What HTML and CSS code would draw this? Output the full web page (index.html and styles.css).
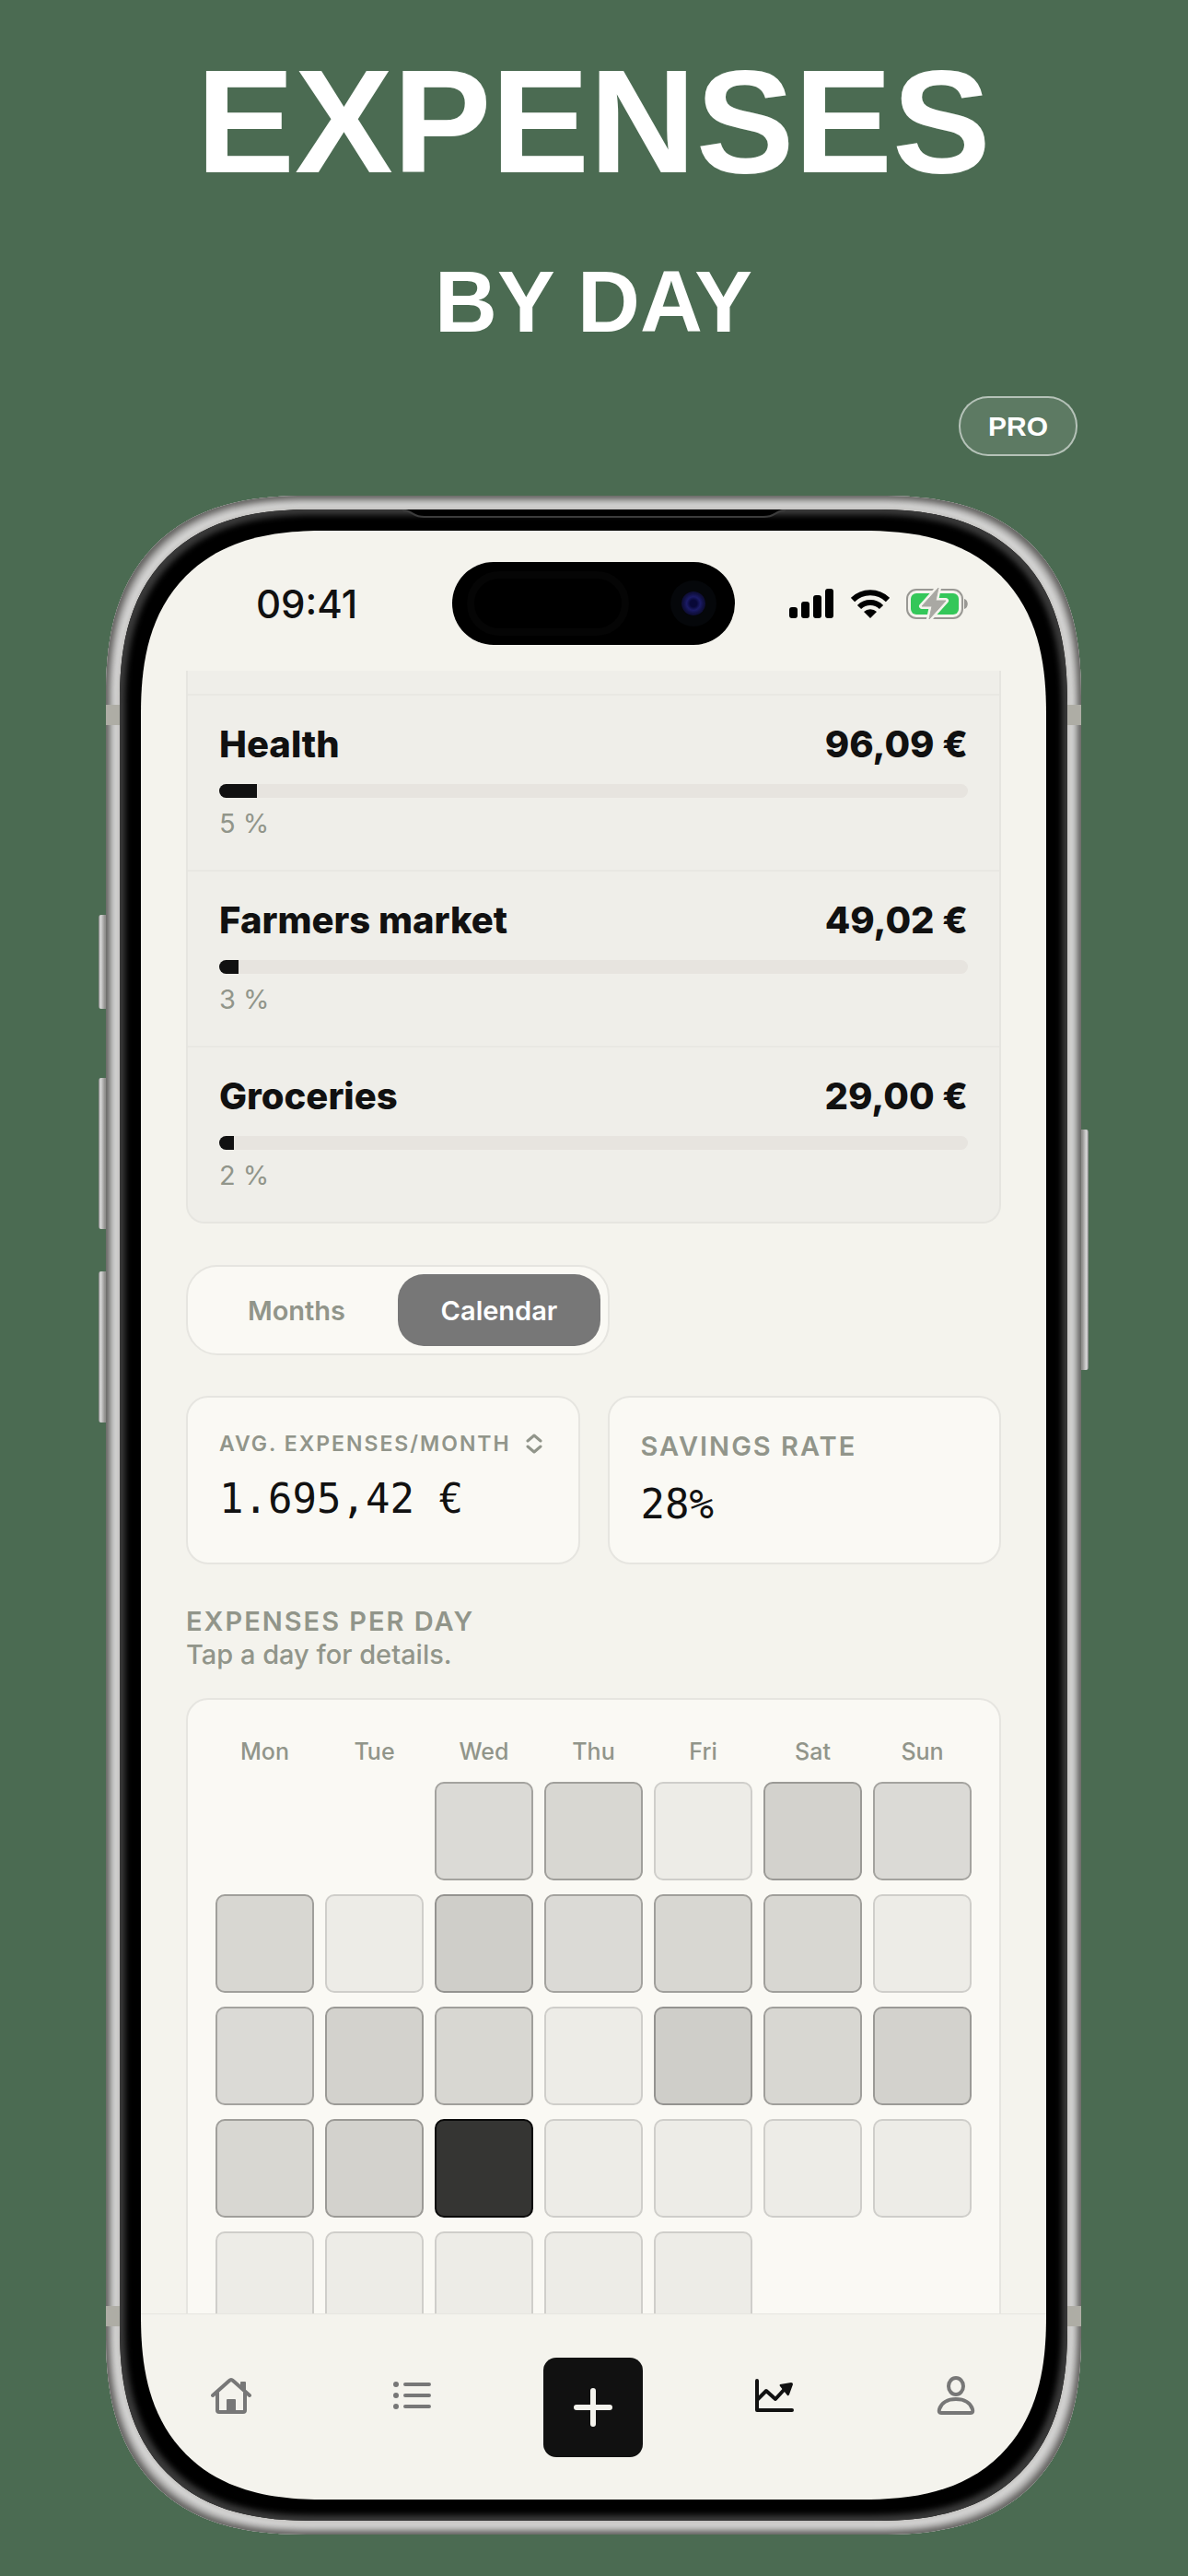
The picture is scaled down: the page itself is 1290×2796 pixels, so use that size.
FILE: index.html
```html
<!DOCTYPE html>
<html lang="en">
<head>
    <meta charset="UTF-8" />
    <meta name="viewport" content="width=device-width, initial-scale=1.0" />
    <title>Expenses by Day</title>
    <link rel="stylesheet" href="styles.css">
</head>
<body>
    <header class="hero">
        <h1>EXPENSES</h1>
        <p class="subtitle">BY DAY</p>
        <span class="pro-badge">PRO</span>
    </header>

    <div class="phone">
        <!-- Hardware details on the frame -->
        <span class="side-button action"></span>
        <span class="side-button volume-up"></span>
        <span class="side-button volume-down"></span>
        <span class="side-button power"></span>
        <span class="antenna top-left"></span>
        <span class="antenna top-right"></span>
        <span class="antenna bottom-left"></span>
        <span class="antenna bottom-right"></span>

        <div class="bezel">
            <svg class="earpiece" viewBox="0 0 416 12" aria-hidden="true">
                <path d="M0 0 C12 0 10 8 24 8 H392 C406 8 404 0 416 0 Z" fill="#000" />
                <path d="M0 1 C12 1 10 8 24 8 H392 C406 8 404 1 416 1" fill="none" stroke="#3c3c3c" stroke-width="2" />
            </svg>

            <div class="screen">
                <div class="status-bar">
                    <span class="time">09:41</span>
                    <span class="island"><span class="sensor"></span><span class="camera"></span></span>
                    <span class="status-icons">
                        <svg width="49" height="32" viewBox="0 0 49 32" aria-hidden="true">
                            <rect x="0" y="20" width="9" height="12" rx="3" />
                            <rect x="13" y="14" width="9" height="18" rx="3" />
                            <rect x="26" y="7" width="9" height="25" rx="3" />
                            <rect x="39" y="0" width="9" height="32" rx="3" />
                        </svg>
                        <svg width="42" height="31" viewBox="0 0 42 31" aria-hidden="true">
                            <path d="M2 11 A27 27 0 0 1 40 11" fill="none" stroke="#000" stroke-width="6" />
                            <path d="M9 19 A17 17 0 0 1 33 19" fill="none" stroke="#000" stroke-width="6" />
                            <path d="M21 31 L14 24 A10 10 0 0 1 28 24 Z" />
                        </svg>
                        <svg width="68" height="36" viewBox="0 0 68 36" aria-hidden="true">
                            <rect x="1" y="3" width="60" height="31" rx="10" fill="none" stroke="#999894" stroke-width="2" />
                            <path d="M63 13 C68 14 68 23 63 24 Z" fill="#999894" />
                            <rect x="5" y="7" width="52" height="23" rx="6" fill="#34c759" />
                            <path d="M35 1 L17 21 H28 L25 35 L43 15 H32 Z" fill="#a9a8a3" stroke="#f4f3ed" stroke-width="6" stroke-linejoin="round" />
                            <path d="M35 1 L17 21 H28 L25 35 L43 15 H32 Z" fill="#a9a8a3" stroke="#a9a8a3" stroke-width="1" stroke-linejoin="round" />
                        </svg>
                    </span>
                </div>

                <main class="content">
                    <ul class="categories">
                        <li class="category cut"></li>
                        <li class="category">
                            <div class="category-head"><span>Health</span><span>96,09 €</span></div>
                            <div class="bar"><div class="bar-fill" style="width: 5%"></div></div>
                            <span class="percent">5 %</span>
                        </li>
                        <li class="category">
                            <div class="category-head"><span>Farmers market</span><span>49,02 €</span></div>
                            <div class="bar"><div class="bar-fill" style="width: 2.6%"></div></div>
                            <span class="percent">3 %</span>
                        </li>
                        <li class="category">
                            <div class="category-head"><span>Groceries</span><span>29,00 €</span></div>
                            <div class="bar"><div class="bar-fill" style="width: 2%"></div></div>
                            <span class="percent">2 %</span>
                        </li>
                    </ul>

                    <div class="segmented">
                        <button type="button">Months</button>
                        <button type="button" class="active">Calendar</button>
                    </div>

                    <div class="stats">
                        <div class="card stat">
                            <button type="button" class="stat-label small">
                                AVG. EXPENSES/MONTH
                                <svg width="18" height="22" viewBox="0 0 18 22" aria-hidden="true">
                                    <path d="M2 8 L9 2 L16 8 M2 14 L9 20 L16 14" />
                                </svg>
                            </button>
                            <span class="stat-value">1.695,42 €</span>
                        </div>
                        <div class="card stat">
                            <span class="stat-label">SAVINGS RATE</span>
                            <span class="stat-value">28%</span>
                        </div>
                    </div>

                    <h2>EXPENSES PER DAY</h2>
                    <p class="hint">Tap a day for details.</p>

                    <div class="card calendar">
                        <span class="weekday">Mon</span>
                        <span class="weekday">Tue</span>
                        <span class="weekday">Wed</span>
                        <span class="weekday">Thu</span>
                        <span class="weekday">Fri</span>
                        <span class="weekday">Sat</span>
                        <span class="weekday">Sun</span>

                        <button type="button" class="day level-1 first" aria-label="1"></button>
                        <button type="button" class="day level-2" aria-label="2"></button>
                        <button type="button" class="day" aria-label="3"></button>
                        <button type="button" class="day level-3" aria-label="4"></button>
                        <button type="button" class="day level-1" aria-label="5"></button>

                        <button type="button" class="day level-2" aria-label="6"></button>
                        <button type="button" class="day" aria-label="7"></button>
                        <button type="button" class="day level-4" aria-label="8"></button>
                        <button type="button" class="day level-1" aria-label="9"></button>
                        <button type="button" class="day level-2" aria-label="10"></button>
                        <button type="button" class="day level-2" aria-label="11"></button>
                        <button type="button" class="day" aria-label="12"></button>

                        <button type="button" class="day level-1" aria-label="13"></button>
                        <button type="button" class="day level-3" aria-label="14"></button>
                        <button type="button" class="day level-2" aria-label="15"></button>
                        <button type="button" class="day" aria-label="16"></button>
                        <button type="button" class="day level-4" aria-label="17"></button>
                        <button type="button" class="day level-2" aria-label="18"></button>
                        <button type="button" class="day level-3" aria-label="19"></button>

                        <button type="button" class="day level-2" aria-label="20"></button>
                        <button type="button" class="day level-3" aria-label="21"></button>
                        <button type="button" class="day level-max" aria-label="22"></button>
                        <button type="button" class="day" aria-label="23"></button>
                        <button type="button" class="day" aria-label="24"></button>
                        <button type="button" class="day" aria-label="25"></button>
                        <button type="button" class="day" aria-label="26"></button>

                        <button type="button" class="day" aria-label="27"></button>
                        <button type="button" class="day" aria-label="28"></button>
                        <button type="button" class="day" aria-label="29"></button>
                        <button type="button" class="day" aria-label="30"></button>
                        <button type="button" class="day" aria-label="31"></button>
                    </div>
                </main>

                <nav class="tab-bar">
                    <a href="#home" aria-label="Home">
                        <svg width="44" height="48" viewBox="0 0 44 48" aria-hidden="true">
                            <path d="M2 21 L20 5 Q22 3 24 5 L42 21 M7 18 V37 Q7 39 9 39 H35 Q37 39 37 37 V18" />
                            <path class="solid" d="M32 7 Q32 6 33 6 H37 Q38 6 38 7 V18 L32 12 Z M17 26 Q17 25 18 25 H26 Q27 25 27 26 V38 H17 Z" />
                        </svg>
                    </a>
                    <a href="#list" aria-label="Transactions">
                        <svg width="44" height="48" viewBox="0 0 44 48" aria-hidden="true">
                            <path d="M14 9 H40 M14 21 H40 M14 33 H40" />
                            <circle class="solid" cx="4" cy="9" r="3" />
                            <circle class="solid" cx="4" cy="21" r="3" />
                            <circle class="solid" cx="4" cy="33" r="3" />
                        </svg>
                    </a>
                    <button type="button" class="add" aria-label="Add expense">
                        <svg width="46" height="46" viewBox="0 0 46 46" aria-hidden="true">
                            <path d="M23 5 V41 M5 23 H41" />
                        </svg>
                    </button>
                    <a href="#stats" class="current" aria-label="Statistics">
                        <svg width="44" height="48" viewBox="0 0 44 48" aria-hidden="true">
                            <path d="M3 5 V37 H41 M4 25 L13 16 L23 25 L34 13" />
                            <path class="solid" d="M28 9 L40 7 Q42 7 42 9 L38 20 Q37 22 36 21 L28 11 Q27 10 28 9 Z" />
                        </svg>
                    </a>
                    <a href="#profile" aria-label="Profile">
                        <svg width="44" height="48" viewBox="0 0 44 48" aria-hidden="true">
                            <ellipse cx="22" cy="11" rx="8" ry="9" />
                            <path d="M6 40 Q3 40 4 36 C6 29 13 25 22 25 C31 25 38 29 40 36 Q41 40 38 40 Z" />
                        </svg>
                    </a>
                </nav>
            </div>
        </div>
    </div>
</body>
</html>
```
FILE: styles.css
```css
* {
    box-sizing: border-box;
}

body {
    font-family: Inter, "Liberation Sans", sans-serif;
    margin: 0;
    padding: 0 116px 45px 115px;
    background-color: #4b6b52;
    color: #111;
}

button {
    font-family: inherit;
    margin: 0;
    padding: 0;
    border: none;
    background: none;
}

/* Title area above the phone */
.hero {
    display: flex;
    flex-direction: column;
    align-items: center;
    padding-top: 40px;
    color: #fff;
    font-family: "Liberation Sans", Arial, sans-serif;
    font-weight: bold;
}

h1 {
    margin: 0;
    font-size: 160px;
    line-height: 184px;
}

.subtitle {
    margin: 48px 0 0;
    font-size: 94px;
    line-height: 112px;
}

.pro-badge {
    align-self: flex-end;
    margin: 46px 4px 43px 0;
    padding: 0 30px;
    border: 2px solid rgba(255, 255, 255, 0.55);
    border-radius: 32px;
    background-color: rgba(255, 255, 255, 0.1);
    font-size: 30px;
    line-height: 61px;
}

/* Phone frame */
.phone {
    position: relative;
    padding: 15px;
    border-radius: 180px;
    background-color: #c9c8c6;
    box-shadow: inset 0 0 5px 3px #666563, inset 0 0 7px 7px #a2a1a0, inset 0 0 3px 12px #d8d8d7;
}

.bezel {
    position: relative;
    padding: 23px;
    border-radius: 174px;
    background-color: #000;
    box-shadow: inset 0 0 6px 6px #3a3a3a;
}

.earpiece {
    position: absolute;
    top: 0;
    left: 50%;
    width: 416px;
    height: 12px;
    transform: translateX(-50%);
}

.side-button {
    position: absolute;
    width: 8px;
    background: linear-gradient(90deg, #777 0, #ddd 2px, #8f8e8c 7px);
    border-radius: 3px 0 0 3px;
}

.action {
    left: -8px;
    top: 455px;
    height: 102px;
}

.volume-up {
    left: -8px;
    top: 632px;
    height: 164px;
}

.volume-down {
    left: -8px;
    top: 842px;
    height: 164px;
}

.power {
    right: -8px;
    top: 688px;
    height: 261px;
    transform: scaleX(-1);
}

.antenna {
    position: absolute;
    width: 15px;
    height: 22px;
    background-color: #aeada5;
}

.top-left {
    left: 0;
    top: 227px;
}

.top-right {
    right: 0;
    top: 227px;
}

.bottom-left {
    left: 0;
    bottom: 226px;
}

.bottom-right {
    right: 0;
    bottom: 226px;
}

/* Screen */
.screen {
    overflow: hidden;
    border-radius: 166px;
    background-color: #f4f3ed;
}

/* Smoother corners where the browser can draw them */
@supports (corner-shape: superellipse(1.3)) {
    .phone,
    .bezel,
    .screen {
        corner-shape: superellipse(1.3);
    }

    .phone {
        border-radius: 218px;
    }

    .bezel {
        border-radius: 210px;
    }

    .screen {
        border-radius: 200px;
    }
}

.status-bar {
    display: grid;
    grid-template-columns: 1fr 307px 1fr;
    align-items: center;
    padding: 34px 84px 28px;
}

.time {
    padding-left: 41px;
    font-size: 42px;
    font-weight: 500;
}

.island {
    display: flex;
    align-items: center;
    justify-content: space-between;
    height: 90px;
    padding: 0 32px 0 16px;
    border-radius: 45px;
    background-color: #000;
}

.sensor {
    width: 176px;
    height: 70px;
    border: 8px solid #050505;
    border-radius: 35px;
}

.camera {
    width: 26px;
    height: 26px;
    border-radius: 50%;
    background: radial-gradient(#080838 20%, #1b1b66 40%, #101040 60%, #08080f 100%);
    box-shadow: 0 0 0 12px #05070a;
}

.status-icons {
    display: flex;
    align-items: center;
    justify-content: flex-end;
    gap: 18px;
}

/* Scrolling part, cut off by the status bar and the tab bar */
.content {
    height: 1783px;
    overflow: hidden;
    padding: 0 49px;
}

.categories {
    margin: 0;
    padding: 0;
    list-style: none;
    border: 2px solid #e6e5e0;
    border-top: none;
    border-radius: 0 0 20px 20px;
    background-color: #efeee9;
}

.category {
    height: 191px;
    padding: 30px 34px 0;
    border-top: 2px solid #e9e8e3;
}

.category.cut {
    height: 25px;
    padding: 0;
    border-top: none;
}

.category-head {
    display: flex;
    justify-content: space-between;
    font-size: 40px;
    font-weight: 800;
    line-height: 46px;
}

.bar {
    height: 15px;
    margin-top: 20px;
    border-radius: 8px;
    background-color: #e7e4df;
    overflow: hidden;
}

.bar-fill {
    height: 100%;
    background-color: #111;
}

.percent {
    display: block;
    margin-top: 10px;
    font-size: 29px;
    line-height: 36px;
    color: #91958a;
}

.segmented {
    display: inline-flex;
    margin-top: 45px;
    padding: 8px;
    border: 2px solid #e6e5e0;
    border-radius: 34px;
    background-color: #faf9f4;
}

.segmented button {
    width: 220px;
    height: 78px;
    border-radius: 28px;
    font-size: 29px;
    font-weight: 600;
    color: #91958a;
}

.segmented .active {
    background-color: #777;
    color: #fff;
}

.card {
    border: 2px solid #e6e5e0;
    border-radius: 24px;
    background-color: #faf9f4;
}

.stats {
    display: grid;
    grid-template-columns: 1fr 1fr;
    gap: 30px;
    margin-top: 44px;
}

.stat {
    display: flex;
    flex-direction: column;
    align-items: flex-start;
    height: 183px;
    padding: 35px 34px 20px;
}

.stat-label {
    display: flex;
    align-items: center;
    gap: 16px;
    font-size: 29px;
    font-weight: 600;
    line-height: 36px;
    letter-spacing: 2px;
    color: #91958a;
}

.stat-label.small {
    font-size: 23px;
    line-height: 30px;
    white-space: nowrap;
}

.stat-label svg {
    fill: none;
    stroke: #91958a;
    stroke-width: 3;
    stroke-linecap: round;
    stroke-linejoin: round;
}

.stat-value {
    margin-top: 19px;
    font-family: "DejaVu Sans Mono", monospace;
    font-size: 44px;
    line-height: 52px;
}

h2 {
    margin: 44px 0 0;
    font-size: 29px;
    font-weight: 600;
    line-height: 36px;
    letter-spacing: 2px;
    color: #91958a;
}

.hint {
    margin: 0;
    font-size: 29px;
    font-weight: 500;
    line-height: 36px;
    color: #91958a;
}

.calendar {
    display: grid;
    grid-template-columns: repeat(7, 1fr);
    gap: 15px 12px;
    margin-top: 29px;
    padding: 38px 30px;
}

.weekday {
    font-size: 25px;
    font-weight: 500;
    line-height: 36px;
    text-align: center;
    color: #91958a;
}

.day {
    aspect-ratio: 1;
    border: 2px solid #cfceca;
    border-radius: 10px;
    background-color: #edece7;
}

.first {
    grid-column: 3;
}

/* The more spent on a day, the darker the cell */
.level-1 {
    border-color: #a4a39f;
    background-color: #dbdad6;
}

.level-2 {
    border-color: #a09f9b;
    background-color: #d8d7d2;
}

.level-3 {
    border-color: #9b9a96;
    background-color: #d3d2cd;
}

.level-4 {
    border-color: #949390;
    background-color: #cfcec9;
}

.level-max {
    border-color: #0a0a0a;
    background-color: #353533;
}

/* Bottom navigation */
.tab-bar {
    display: grid;
    grid-template-columns: repeat(5, 1fr);
    align-items: start;
    justify-items: center;
    height: 202px;
    padding-top: 47px;
    border-top: 1px solid #e6e5e0;
}

.tab-bar a {
    padding-top: 20px;
}

.tab-bar svg {
    display: block;
    fill: none;
    stroke: #777;
    stroke-width: 4;
    stroke-linecap: round;
    stroke-linejoin: round;
}

.tab-bar .solid {
    fill: #777;
    stroke: none;
}

.tab-bar .current svg {
    stroke: #111;
}

.tab-bar .current .solid {
    fill: #111;
}

.tab-bar .add {
    display: grid;
    place-items: center;
    width: 108px;
    height: 108px;
    border-radius: 14px;
    background-color: #111;
}

.tab-bar .add svg {
    stroke: #f4f3ed;
    stroke-width: 6;
}
```
